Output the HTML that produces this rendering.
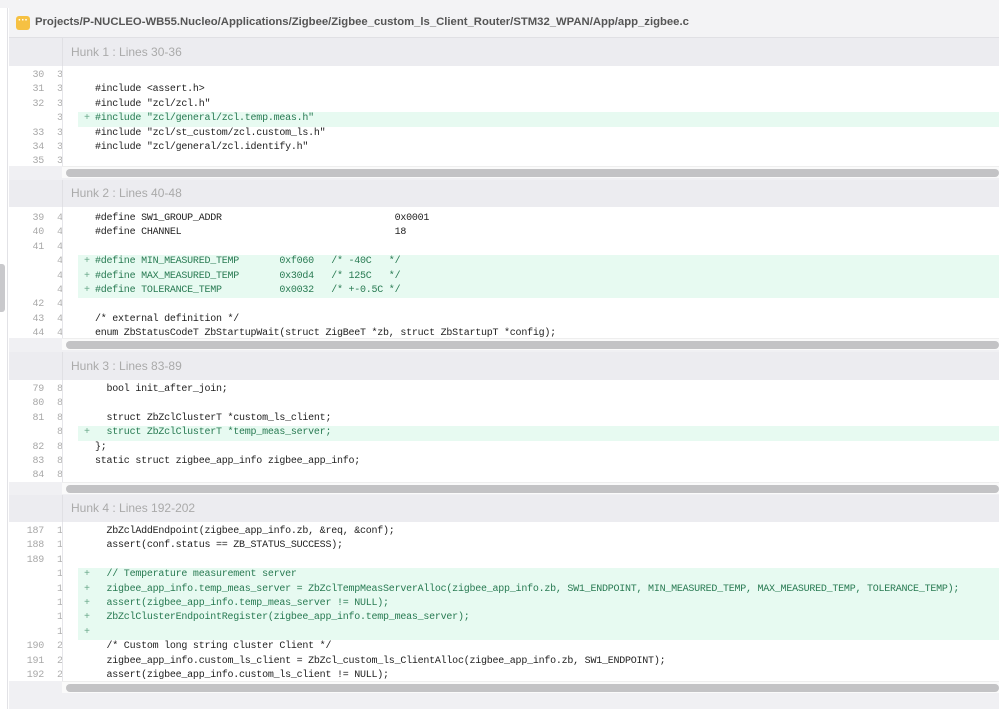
<!DOCTYPE html>
<html><head><meta charset="utf-8"><style>
*{margin:0;padding:0;box-sizing:border-box}
body{width:999px;height:709px;overflow:hidden;background:#fff;font-family:"Liberation Sans",sans-serif;position:relative}
.topstrip{position:absolute;left:0;top:0;width:999px;height:8px;background:#f3f3f5}
.leftstrip{position:absolute;left:0;top:8px;width:8px;height:701px;background:#fff;border-right:1px solid #e2e2e6}
.lscroll{position:absolute;left:0;top:264px;width:5px;height:48px;background:#c9c9cc;border-radius:0 3px 3px 0}
.card{position:absolute;left:9px;top:8px;width:990px;height:701px;background:#f0f0f3}
.hdr{position:absolute;left:9px;top:8px;width:990px;height:30px;background:#f3f3f5;border-bottom:1px solid #e0e0e4;font-size:11.3px;font-weight:bold;color:#555;line-height:29px;padding-left:26px}
.icon{position:absolute;left:7px;top:8px;width:14px;height:14px;background:#f6c143;border-radius:3px;color:#fff;font-size:10px;line-height:10px;text-align:center;font-weight:bold}
.hunk{position:absolute;left:9px;width:990px;background:#ececf0;color:#aaa;font-size:12px;padding-left:62px}
.hunk:before{content:"";position:absolute;left:53px;top:0;bottom:0;width:1px;background:#e0e0e4}
.sec{position:absolute;left:9px;width:990px;background:#fff;overflow:hidden}
.sec:before{content:"";position:absolute;left:53px;top:0;bottom:0;width:1px;background:#e6e6ea;z-index:2}
.ln{position:relative;height:14.4px;line-height:14.4px;font-family:"Liberation Mono",monospace;font-size:10px;letter-spacing:-0.24px;white-space:pre;color:#222}
.ln .a{position:absolute;left:0;width:35px;text-align:right;color:#a8a8a8}
.ln .b{position:absolute;left:48px;color:#b0b0b0}
.ln .c{position:absolute;left:86px}
.ln.add .c{color:#287a52}
.ln.add:after{content:"";position:absolute;left:69px;right:0;top:0;bottom:0;background:#e7faf1;z-index:0}
.ln span{z-index:1}
.ln .p{position:absolute;left:75px;color:#6aa88a}
.sb{position:absolute;left:62px;width:937px;height:12px;background:#fafafa;border-top:1px solid #eee}
.sb:after{content:"";position:absolute;left:4px;right:0;top:2px;height:8px;background:#c3c3c5;border-radius:4px}
</style></head><body>
<div class="topstrip"></div>
<div class="leftstrip"></div>
<div class="lscroll"></div>
<div class="card"></div>
<div class="hdr"><div class="icon">···</div>Projects/P-NUCLEO-WB55.Nucleo/Applications/Zigbee/Zigbee_custom_ls_Client_Router/STM32_WPAN/App/app_zigbee.c</div>

<div class="hunk" style="top:38px;height:28px;line-height:28px">Hunk 1 : Lines 30-36</div>
<div class="sec" style="top:66px;height:100px;padding-top:3px">
<div class="ln"><span class="a">30</span><span class="b">3</span><span class="c"></span></div>
<div class="ln"><span class="a">31</span><span class="b">3</span><span class="c">#include &lt;assert.h&gt;</span></div>
<div class="ln"><span class="a">32</span><span class="b">3</span><span class="c">#include "zcl/zcl.h"</span></div>
<div class="ln add"><span class="b">3</span><span class="p">+</span><span class="c">#include "zcl/general/zcl.temp.meas.h"</span></div>
<div class="ln"><span class="a">33</span><span class="b">3</span><span class="c">#include "zcl/st_custom/zcl.custom_ls.h"</span></div>
<div class="ln"><span class="a">34</span><span class="b">3</span><span class="c">#include "zcl/general/zcl.identify.h"</span></div>
<div class="ln"><span class="a">35</span><span class="b">3</span><span class="c"></span></div>
</div>
<div class="sb" style="top:166px"></div>

<div class="hunk" style="top:180px;height:27px;line-height:27px">Hunk 2 : Lines 40-48</div>
<div class="sec" style="top:207px;height:131px;padding-top:5px">
<div class="ln"><span class="a">39</span><span class="b">4</span><span class="c">#define SW1_GROUP_ADDR                              0x0001</span></div>
<div class="ln"><span class="a">40</span><span class="b">4</span><span class="c">#define CHANNEL                                     18</span></div>
<div class="ln"><span class="a">41</span><span class="b">4</span><span class="c"></span></div>
<div class="ln add"><span class="b">4</span><span class="p">+</span><span class="c">#define MIN_MEASURED_TEMP       0xf060   /* -40C   */</span></div>
<div class="ln add"><span class="b">4</span><span class="p">+</span><span class="c">#define MAX_MEASURED_TEMP       0x30d4   /* 125C   */</span></div>
<div class="ln add"><span class="b">4</span><span class="p">+</span><span class="c">#define TOLERANCE_TEMP          0x0032   /* +-0.5C */</span></div>
<div class="ln"><span class="a">42</span><span class="b">4</span><span class="c"></span></div>
<div class="ln"><span class="a">43</span><span class="b">4</span><span class="c">/* external definition */</span></div>
<div class="ln"><span class="a">44</span><span class="b">4</span><span class="c">enum ZbStatusCodeT ZbStartupWait(struct ZigBeeT *zb, struct ZbStartupT *config);</span></div>
</div>
<div class="sb" style="top:338px"></div>

<div class="hunk" style="top:352px;height:28px;line-height:28px">Hunk 3 : Lines 83-89</div>
<div class="sec" style="top:380px;height:102px;padding-top:3px">
<div class="ln"><span class="a">79</span><span class="b">8</span><span class="c">  bool init_after_join;</span></div>
<div class="ln"><span class="a">80</span><span class="b">8</span><span class="c"></span></div>
<div class="ln"><span class="a">81</span><span class="b">8</span><span class="c">  struct ZbZclClusterT *custom_ls_client;</span></div>
<div class="ln add"><span class="b">8</span><span class="p">+</span><span class="c">  struct ZbZclClusterT *temp_meas_server;</span></div>
<div class="ln"><span class="a">82</span><span class="b">8</span><span class="c">};</span></div>
<div class="ln"><span class="a">83</span><span class="b">8</span><span class="c">static struct zigbee_app_info zigbee_app_info;</span></div>
<div class="ln"><span class="a">84</span><span class="b">8</span><span class="c"></span></div>
</div>
<div class="sb" style="top:482px"></div>

<div class="hunk" style="top:495px;height:27px;line-height:27px">Hunk 4 : Lines 192-202</div>
<div class="sec" style="top:522px;height:159px;padding-top:3px">
<div class="ln"><span class="a">187</span><span class="b">1</span><span class="c">  ZbZclAddEndpoint(zigbee_app_info.zb, &amp;req, &amp;conf);</span></div>
<div class="ln"><span class="a">188</span><span class="b">1</span><span class="c">  assert(conf.status == ZB_STATUS_SUCCESS);</span></div>
<div class="ln"><span class="a">189</span><span class="b">1</span><span class="c"></span></div>
<div class="ln add"><span class="b">1</span><span class="p">+</span><span class="c">  // Temperature measurement server</span></div>
<div class="ln add"><span class="b">1</span><span class="p">+</span><span class="c">  zigbee_app_info.temp_meas_server = ZbZclTempMeasServerAlloc(zigbee_app_info.zb, SW1_ENDPOINT, MIN_MEASURED_TEMP, MAX_MEASURED_TEMP, TOLERANCE_TEMP);</span></div>
<div class="ln add"><span class="b">1</span><span class="p">+</span><span class="c">  assert(zigbee_app_info.temp_meas_server != NULL);</span></div>
<div class="ln add"><span class="b">1</span><span class="p">+</span><span class="c">  ZbZclClusterEndpointRegister(zigbee_app_info.temp_meas_server);</span></div>
<div class="ln add"><span class="b">1</span><span class="p">+</span><span class="c"></span></div>
<div class="ln"><span class="a">190</span><span class="b">2</span><span class="c">  /* Custom long string cluster Client */</span></div>
<div class="ln"><span class="a">191</span><span class="b">2</span><span class="c">  zigbee_app_info.custom_ls_client = ZbZcl_custom_ls_ClientAlloc(zigbee_app_info.zb, SW1_ENDPOINT);</span></div>
<div class="ln"><span class="a">192</span><span class="b">2</span><span class="c">  assert(zigbee_app_info.custom_ls_client != NULL);</span></div>
</div>
<div class="sb" style="top:681px"></div>
</body></html>
